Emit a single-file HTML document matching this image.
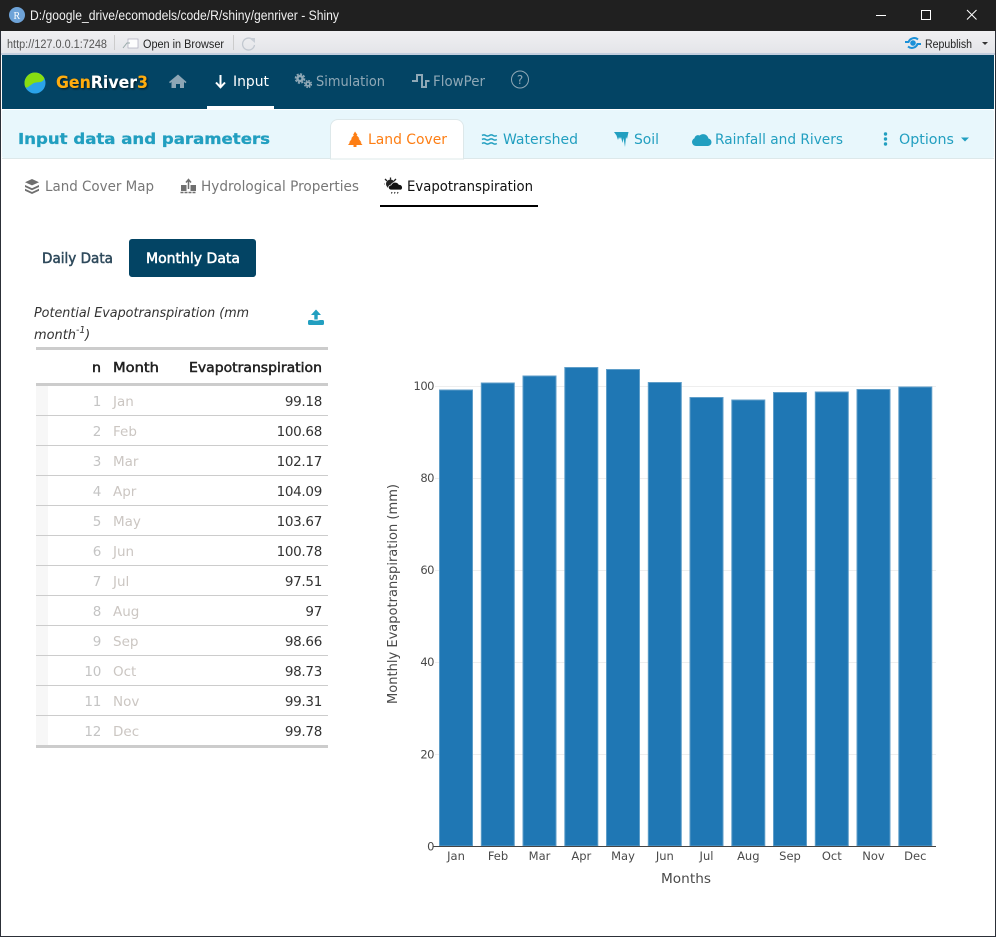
<!DOCTYPE html>
<html><head><meta charset="utf-8"><title>GenRiver3</title>
<style>
html,body{margin:0;padding:0;background:#fff;width:996px;height:937px;overflow:hidden}
svg{display:block}
text{font-family:"DejaVu Sans",sans-serif;white-space:pre}
.lib{font-family:"Liberation Sans",sans-serif}
.tick{font-size:11.5px;fill:#4a4a4a;letter-spacing:-.5px}
.mo{font-size:11.5px;fill:#4a4a4a;text-anchor:middle}
.n{font-size:13.5px;fill:#c4c4c4;text-anchor:end;letter-spacing:-.3px}
.m{font-size:13.5px;fill:#cbc6c2}
.v{font-size:13.5px;fill:#333;text-anchor:end;letter-spacing:-.3px}
.hd{font-size:13.5px;fill:#222;stroke:#222;stroke-width:.5px}
.tab{font-size:14px;fill:#229fc0}
.sub{font-size:14px;fill:#777}
.sep{fill:#ccc}
.grid{fill:#eee}
</style></head><body>
<svg width="996" height="937" viewBox="0 0 996 937" xmlns="http://www.w3.org/2000/svg">
<defs>
<linearGradient id="tb" x1="0" y1="0" x2="0" y2="1"><stop offset="0" stop-color="#f0f0f2"/><stop offset="1" stop-color="#e4e5e9"/></linearGradient>
<filter id="sh" x="-10%" y="-30%" width="120%" height="160%"><feDropShadow dx="1" dy="1" stdDeviation="1" flood-color="#000" flood-opacity=".7"/></filter>
</defs>
<rect width="996" height="937" fill="#fff"/>
<!-- title bar -->
<rect x="0" y="0" width="996" height="31" fill="#202020"/>
<circle cx="17" cy="15" r="8" fill="#6ea3d8"/>
<text x="13.500" y="19" font-size="10" fill="#fff" style="font-family:'Liberation Serif',serif">R</text>
<text class="lib" x="30" y="20" font-size="13.500" fill="#f0f0f0" textLength="309" lengthAdjust="spacingAndGlyphs">D:/google_drive/ecomodels/code/R/shiny/genriver - Shiny</text>
<rect x="876" y="15" width="10" height="1" fill="#fff"/>
<rect x="921.500" y="10.500" width="9" height="9" fill="none" stroke="#fff"/>
<path d="M967 10L976.500 19.500M976.500 10L967 19.500" stroke="#fff" fill="none"/>
<!-- toolbar -->
<rect x="1" y="31" width="994" height="22" fill="url(#tb)"/>
<rect x="1" y="53" width="994" height="2" fill="#c4cfdf"/>
<text class="lib" x="7" y="48" font-size="11.500" fill="#555" textLength="100" lengthAdjust="spacingAndGlyphs">http://127.0.0.1:7248</text>
<rect x="114" y="35" width="1" height="15" fill="#ccc"/>
<rect x="128" y="39" width="10" height="9" fill="#fdfdfd" stroke="#aab" stroke-width=".7"/>
<path d="M123 48l4-5h3" stroke="#9aa" fill="none"/>
<text class="lib" x="143" y="48" font-size="11.500" fill="#222" textLength="81" lengthAdjust="spacingAndGlyphs">Open in Browser</text>
<rect x="233" y="35" width="1" height="15" fill="#ccc"/>
<path d="M253 40a6 6 0 1 0 1.500 5" stroke="#c2c8d0" stroke-width="1.300" fill="none"/><path d="M249 38h6v5z" fill="#c8ced6"/>
<path d="M905 42h3.500a6 6 0 0 1 9.500-2.500M921 44h-3.500a6 6 0 0 1-9.500 2.500" stroke="#1a90d8" stroke-width="2" fill="none"/><circle cx="913" cy="43" r="2.800" fill="#1a90d8"/>
<text class="lib" x="925" y="48" font-size="11.500" fill="#222" textLength="47" lengthAdjust="spacingAndGlyphs">Republish</text>
<path d="M982 42h6l-3 3z" fill="#333"/>
<!-- navbar -->
<rect x="2" y="55" width="992" height="54" fill="#034464"/>
<circle cx="35" cy="83" r="10.500" fill="#2aa3ea"/>
<path d="M25.500 87.500A10.500 10.500 0 0 1 44.500 78.500C42 84 37 81 33 83.500S28 88 25.500 87.500Z" fill="#88dd11"/>
<text x="56" y="88" font-size="17" font-weight="bold" textLength="92" lengthAdjust="spacingAndGlyphs" fill="#fff" filter="url(#sh)"><tspan fill="#ffac10">Gen</tspan>River<tspan fill="#ffac10">3</tspan></text>
<path d="M178 74.500l-9 7.500 1 1.200 1.500-1.200V88h4.500v-4h4v4H184v-6l1.500 1.200 1-1.200z" fill="#8da6b5"/>
<path d="M220.500 75v12M216 82.500l4.500 4.800 4.500-4.800" stroke="#fff" stroke-width="2" fill="none"/>
<text x="233" y="86" font-size="14" fill="#fff" textLength="36" lengthAdjust="spacingAndGlyphs">Input</text>
<rect x="207" y="106" width="67" height="3" fill="#fff"/>
<circle cx="300" cy="78.500" r="3.800" fill="#8fa8b6"/><circle cx="300" cy="78.500" r="4.500" fill="none" stroke="#8fa8b6" stroke-width="1.600" stroke-dasharray="2.200 1.300"/><circle cx="300" cy="78.500" r="1.300" fill="#034464"/><circle cx="308" cy="84" r="2.800" fill="#8fa8b6"/><circle cx="308" cy="84" r="3.400" fill="none" stroke="#8fa8b6" stroke-width="1.400" stroke-dasharray="1.700 1"/><circle cx="308" cy="84" r="1" fill="#034464"/>
<text x="316" y="86" font-size="14" fill="#8fa8b6" textLength="69" lengthAdjust="spacingAndGlyphs">Simulation</text>
<path d="M412 81h5v-6h5v12h4v-6h3.500" stroke="#8fa8b6" stroke-width="2" fill="none"/>
<text x="433" y="86" font-size="14" fill="#8fa8b6" textLength="52" lengthAdjust="spacingAndGlyphs">FlowPer</text>
<circle cx="520" cy="79.500" r="8.500" fill="none" stroke="#8fa8b6"/>
<text x="520" y="84" font-size="12" fill="#8fa8b6" text-anchor="middle">?</text>
<!-- sub header -->
<rect x="2" y="110" width="992" height="48" rx="2" fill="#e8f7fc"/>
<rect x="2" y="158" width="992" height="1" fill="#dde8ea"/>
<text x="18" y="144" font-size="15" font-weight="bold" fill="#229fc0" stroke="#229fc0" stroke-width=".3" textLength="252" lengthAdjust="spacingAndGlyphs">Input data and parameters</text>
<path d="M330.500 159V127a7.500 7.500 0 0 1 7.500-7.500h118a7.500 7.500 0 0 1 7.500 7.500v32z" fill="#fff" stroke="#dde8ea"/>
<path d="M355 131.500l2.500 3.500h-1l3 3.500h-1l3 4h-1l2 2.500H356.500v2h-3v-2H348l2-2.500h-1l3-4h-1l3-3.500h-1z" fill="#fd7e14"/>
<text x="368" y="144" font-size="14" fill="#fd7e14" textLength="79" lengthAdjust="spacingAndGlyphs">Land Cover</text>
<path d="M482 135.500q1.900-1.200 3.700 0t3.700 0 3.700 0 3.700 0M482 139.500q1.900-1.200 3.700 0t3.700 0 3.700 0 3.700 0M482 143.500q1.900-1.200 3.700 0t3.700 0 3.700 0 3.700 0" stroke="#229fc0" stroke-width="1.500" fill="none"/>
<text class="tab" x="503" y="144" textLength="75" lengthAdjust="spacingAndGlyphs">Watershed</text>
<path d="M614 132h14.500l-1.500 7-1-2-1 10-1.500-9-1 5-1.500-6-1 2-1-2-1 3-1.500-4.500z" fill="#229fc0"/>
<text class="tab" x="634" y="144" textLength="25" lengthAdjust="spacingAndGlyphs">Soil</text>
<path d="M696 146a4 4 0 0 1-1.500-7.700 3.500 3.500 0 0 1 5-2.800 5.500 5.500 0 0 1 9 3 3.800 3.800 0 0 1-.5 7.500z" fill="#229fc0"/>
<text class="tab" x="715" y="144" textLength="128" lengthAdjust="spacingAndGlyphs">Rainfall and Rivers</text>
<circle cx="885.500" cy="134" r="1.700" fill="#229fc0"/><circle cx="885.500" cy="139" r="1.700" fill="#229fc0"/><circle cx="885.500" cy="144" r="1.700" fill="#229fc0"/>
<text class="tab" x="899" y="144" textLength="55" lengthAdjust="spacingAndGlyphs">Options</text>
<path d="M961 137.500h8l-4 4z" fill="#229fc0"/>
<!-- sub tabs -->
<path d="M32 179l7 3.200-7 3.200-7-3.200zM25 185l7 3.200 7-3.200v2l-7 3.200-7-3.200zM25 188.800l7 3.200 7-3.200v2l-7 3.200-7-3.200z" fill="#6f6f6f"/>
<text class="sub" x="45" y="191" textLength="109" lengthAdjust="spacingAndGlyphs">Land Cover Map</text>
<path d="M181 185h5.500v6H181zM190.500 185h5.500v6h-5.500z" fill="#6f6f6f"/><path d="M188.500 180v9M186 182.500l2.500-3 2.500 3" stroke="#6f6f6f" stroke-width="1.500" fill="none"/><path d="M180.500 192.500h16" stroke="#6f6f6f" stroke-width="1.500" stroke-dasharray="3 1"/>
<text class="sub" x="201" y="191" textLength="158" lengthAdjust="spacingAndGlyphs">Hydrological Properties</text>
<circle cx="390.500" cy="184" r="4.500" fill="#222"/><path d="M385 179l2 2M390.500 177.500v2M396 179l-2 2M385 184h-.5" stroke="#222" stroke-width="1.300"/>
<path d="M391 190a2.500 2.500 0 0 1 0-5 4.500 4.500 0 0 1 8-.5 3 3 0 0 1 2 5.500z" fill="#111" stroke="#fff" stroke-width=".7"/>
<path d="M392 192l-.5 1.500M395 192l-.5 1.500M398 192l-.5 1.500" stroke="#111"/>
<text x="407" y="191" font-size="14" fill="#111" textLength="126" lengthAdjust="spacingAndGlyphs">Evapotranspiration</text>
<rect x="380" y="205" width="158" height="2" fill="#000"/>
<!-- pills -->
<text x="42" y="263" font-size="14" fill="#2f4a5c" stroke="#2f4a5c" stroke-width=".5" textLength="71" lengthAdjust="spacingAndGlyphs">Daily Data</text>
<rect x="129" y="239" width="127" height="38" rx="3" fill="#034464"/>
<text x="146" y="263" font-size="14" fill="#fff" stroke="#fff" stroke-width=".5" textLength="94" lengthAdjust="spacingAndGlyphs">Monthly Data</text>
<!-- caption -->
<text x="34" y="317" font-size="13.500" font-style="italic" fill="#333" textLength="215" lengthAdjust="spacingAndGlyphs">Potential Evapotranspiration (mm</text>
<text x="34" y="339" font-size="13.500" font-style="italic" fill="#333" textLength="42" lengthAdjust="spacingAndGlyphs">month</text>
<text x="76" y="333" font-size="9.500" font-style="italic" fill="#333">-1</text>
<text x="85" y="339" font-size="13.500" font-style="italic" fill="#333">)</text>
<path d="M316 309.500l5 5.500h-3.300v4.500h-3.400V315H311z" fill="#229fc0"/><path d="M312 320a7 3 0 0 0 8 0h3a1.500 1.500 0 0 1 1 1.500v2a1.500 1.500 0 0 1-1.500 1.500h-13a1.500 1.500 0 0 1-1.500-1.500v-2a1.500 1.500 0 0 1 1-1.500z" fill="#229fc0"/>
<!-- table -->
<rect x="36" y="347" width="292" height="3" fill="#ccc"/>
<text class="hd" x="92" y="372" textLength="9" lengthAdjust="spacingAndGlyphs">n</text>
<text class="hd" x="113" y="372" textLength="46" lengthAdjust="spacingAndGlyphs">Month</text>
<text class="hd" x="189" y="372" textLength="133" lengthAdjust="spacingAndGlyphs">Evapotranspiration</text>
<rect x="36" y="383" width="292" height="3" fill="#ccc"/>
<rect x="36" y="386" width="12" height="359" fill="#f7f7f7"/>
<rect class="sep" x="36" y="415" width="292" height="1"/><rect class="sep" x="36" y="445" width="292" height="1"/><rect class="sep" x="36" y="475" width="292" height="1"/><rect class="sep" x="36" y="505" width="292" height="1"/><rect class="sep" x="36" y="535" width="292" height="1"/><rect class="sep" x="36" y="565" width="292" height="1"/><rect class="sep" x="36" y="595" width="292" height="1"/><rect class="sep" x="36" y="625" width="292" height="1"/><rect class="sep" x="36" y="655" width="292" height="1"/><rect class="sep" x="36" y="685" width="292" height="1"/><rect class="sep" x="36" y="715" width="292" height="1"/>
<rect x="36" y="745" width="292" height="3" fill="#ccc"/>
<text class="n" x="101" y="406">1</text><text class="m" x="113" y="406">Jan</text><text class="v" x="322" y="406">99.18</text>
<text class="n" x="101" y="436">2</text><text class="m" x="113" y="436">Feb</text><text class="v" x="322" y="436">100.68</text>
<text class="n" x="101" y="466">3</text><text class="m" x="113" y="466">Mar</text><text class="v" x="322" y="466">102.17</text>
<text class="n" x="101" y="496">4</text><text class="m" x="113" y="496">Apr</text><text class="v" x="322" y="496">104.09</text>
<text class="n" x="101" y="526">5</text><text class="m" x="113" y="526">May</text><text class="v" x="322" y="526">103.67</text>
<text class="n" x="101" y="556">6</text><text class="m" x="113" y="556">Jun</text><text class="v" x="322" y="556">100.78</text>
<text class="n" x="101" y="586">7</text><text class="m" x="113" y="586">Jul</text><text class="v" x="322" y="586">97.51</text>
<text class="n" x="101" y="616">8</text><text class="m" x="113" y="616">Aug</text><text class="v" x="322" y="616">97</text>
<text class="n" x="101" y="646">9</text><text class="m" x="113" y="646">Sep</text><text class="v" x="322" y="646">98.66</text>
<text class="n" x="101" y="676">10</text><text class="m" x="113" y="676">Oct</text><text class="v" x="322" y="676">98.73</text>
<text class="n" x="101" y="706">11</text><text class="m" x="113" y="706">Nov</text><text class="v" x="322" y="706">99.31</text>
<text class="n" x="101" y="736">12</text><text class="m" x="113" y="736">Dec</text><text class="v" x="322" y="736">99.78</text>
<!-- chart -->
<rect class="grid" x="435" y="386" width="501" height="1"/><rect class="grid" x="435" y="478" width="501" height="1"/><rect class="grid" x="435" y="570" width="501" height="1"/><rect class="grid" x="435" y="662" width="501" height="1"/><rect class="grid" x="435" y="754" width="501" height="1"/>
<g fill="#1f77b4" stroke="#5f9ec9" stroke-width="1">
<rect x="439.500" y="390" width="33" height="456"/>
<rect x="481.300" y="383" width="33" height="463"/>
<rect x="523" y="376" width="33" height="470"/>
<rect x="564.800" y="367.500" width="33" height="478.500"/>
<rect x="606.500" y="369.500" width="33" height="476.500"/>
<rect x="648.300" y="382.500" width="33" height="463.500"/>
<rect x="690" y="397.500" width="33" height="448.500"/>
<rect x="731.800" y="400" width="33" height="446"/>
<rect x="773.500" y="392.500" width="33" height="453.500"/>
<rect x="815.300" y="392" width="33" height="454"/>
<rect x="857" y="389.500" width="33" height="456.500"/>
<rect x="898.800" y="387" width="33" height="459"/>
</g>
<rect x="433" y="846" width="503" height="1" fill="#444"/>
<text class="tick" x="434" y="390" text-anchor="end">100</text>
<text class="tick" x="434" y="482" text-anchor="end">80</text>
<text class="tick" x="434" y="574" text-anchor="end">60</text>
<text class="tick" x="434" y="666" text-anchor="end">40</text>
<text class="tick" x="434" y="758.500" text-anchor="end">20</text>
<text class="tick" x="434" y="850.500" text-anchor="end">0</text>
<text class="mo" x="456" y="860">Jan</text><text class="mo" x="498" y="860">Feb</text><text class="mo" x="539.500" y="860">Mar</text><text class="mo" x="581.300" y="860">Apr</text><text class="mo" x="623" y="860">May</text><text class="mo" x="664.800" y="860">Jun</text><text class="mo" x="706.500" y="860">Jul</text><text class="mo" x="748.300" y="860">Aug</text><text class="mo" x="790" y="860">Sep</text><text class="mo" x="831.800" y="860">Oct</text><text class="mo" x="873.500" y="860">Nov</text><text class="mo" x="915.300" y="860">Dec</text>
<text x="661" y="883" font-size="13.500" fill="#4a4a4a" textLength="50" lengthAdjust="spacingAndGlyphs">Months</text>
<text transform="translate(397 704) rotate(-90)" font-size="13.500" fill="#4a4a4a" textLength="220" lengthAdjust="spacingAndGlyphs">Monthly Evapotranspiration (mm)</text>
<!-- window edges -->
<rect x="0" y="31" width="1" height="906" fill="#2c3038"/>
<rect x="995" y="31" width="1" height="906" fill="#2c3038"/>
<rect x="0" y="936" width="996" height="1" fill="#2c3038"/>
</svg>
</body></html>
